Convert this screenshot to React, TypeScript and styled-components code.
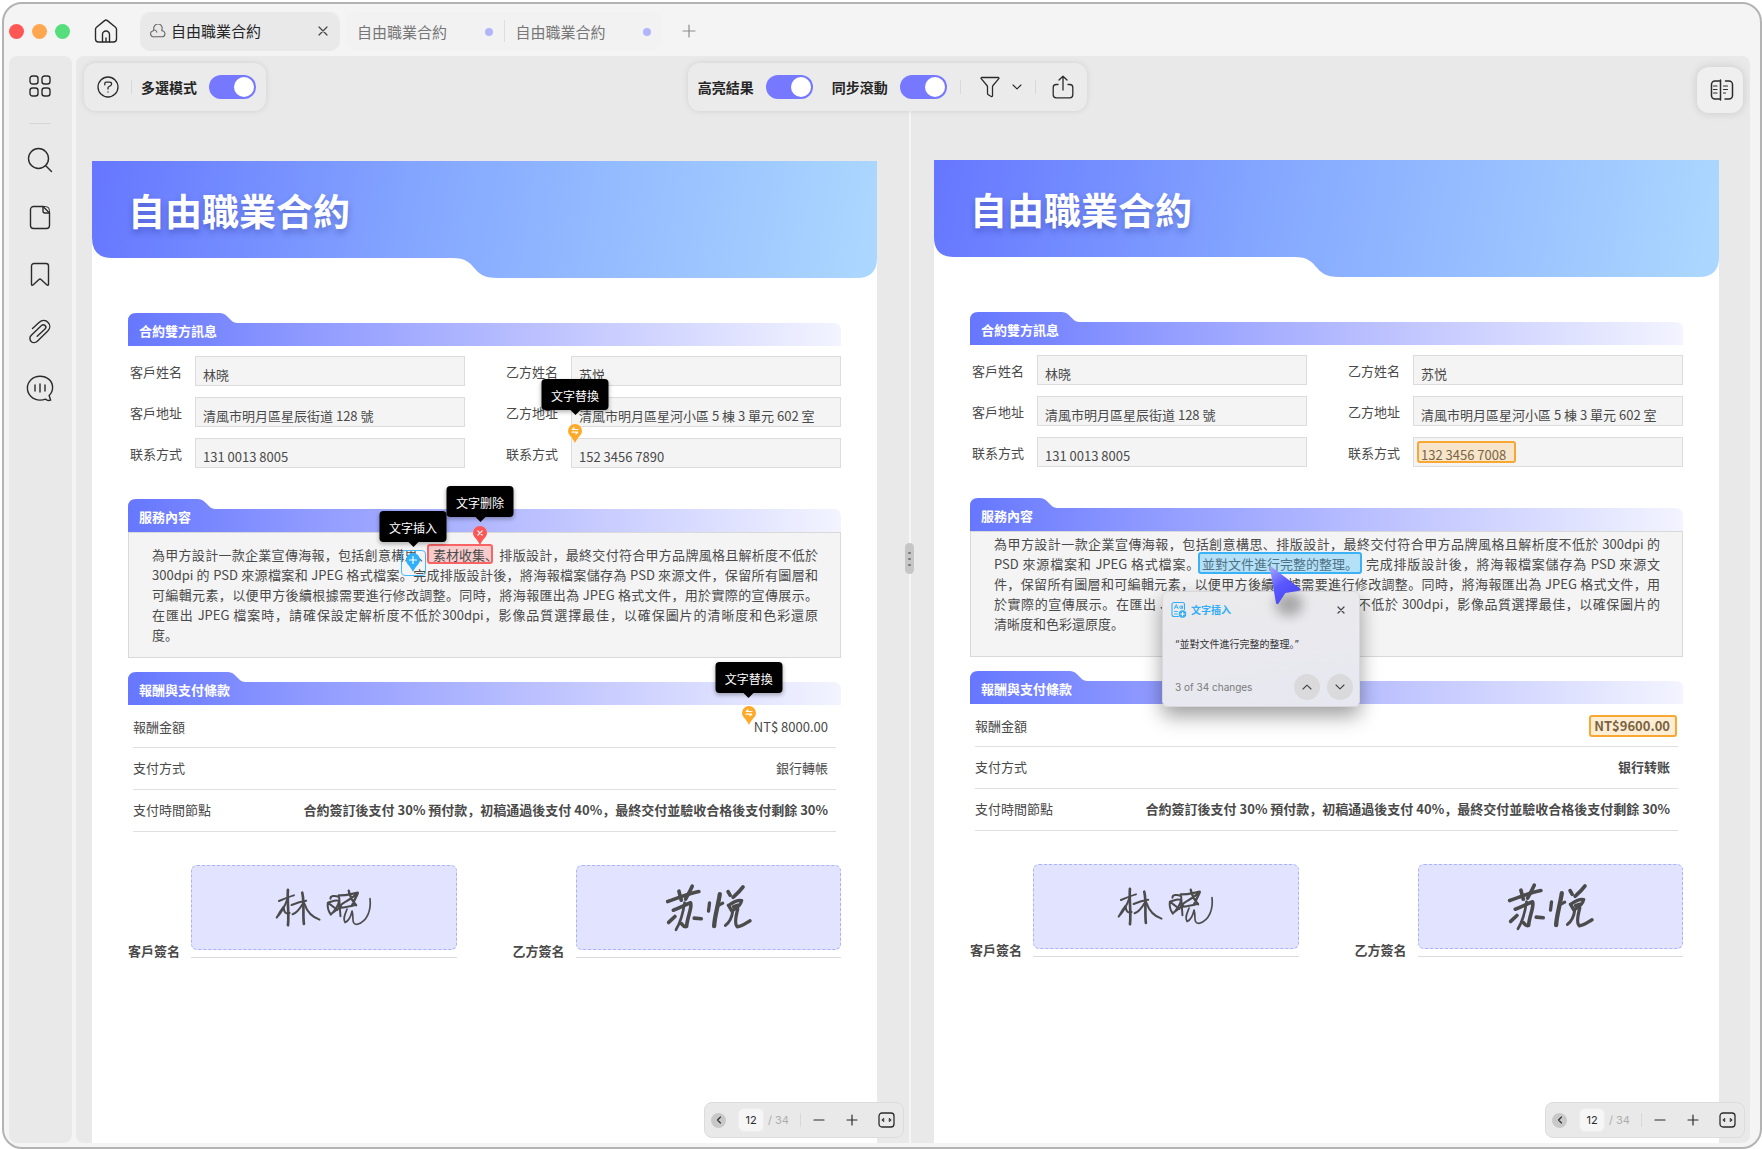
import React from "react";
import styled, { createGlobalStyle, css } from "styled-components";

const GlobalStyle = createGlobalStyle`
  *, *::before, *::after { box-sizing: border-box; }
  body {
    margin: 0;
    background: #fff;
    color: #262626;
    font-family: "Noto Sans CJK SC", "Noto Sans CJK TC", sans-serif;
    font-size: 13px;
  }
  button, input { font: inherit; color: inherit; }
  svg { display: block; }
`;

/* ---------- window frame ---------- */

const Window = styled.div`
  margin: 2px 0 0 2px;
  height: calc(100vh - 2px);
  display: flex;
  flex-direction: column;
  background: #f4f4f4;
  border: 2px solid #b3b3b3;
  border-radius: 20px;
  overflow: hidden;
`;

const TitleBar = styled.header`
  flex: none;
  height: 52px;
  display: flex;
  align-items: center;
  padding: 2px 5px 0;
`;

const Lights = styled.div`
  display: flex;
  gap: 8px;
  margin-right: 23px;
`;

const Light = styled.span<{ $color: string }>`
  width: 15px;
  height: 15px;
  border-radius: 50%;
  background: ${(p) => p.$color};
`;

const IconButton = styled.button<{ $w?: number; $h?: number; $color?: string }>`
  flex: none;
  width: ${(p) => p.$w ?? 28}px;
  height: ${(p) => p.$h ?? 28}px;
  padding: 0;
  border: 0;
  background: none;
  display: flex;
  align-items: center;
  justify-content: center;
  color: ${(p) => p.$color ?? "#2b2b2b"};
  cursor: pointer;
`;

const ActiveTab = styled.div`
  width: 200px;
  height: 39px;
  margin: 0 6px 0 21px;
  padding: 0 7px 0 10px;
  display: flex;
  align-items: center;
  background: #e9e9e9;
  border-radius: 10px;
  color: #666;
`;

const TabName = styled.button`
  flex: 1;
  padding: 0;
  border: 0;
  background: none;
  text-align: left;
  font-size: 15px;
  line-height: 22px;
  color: #262626;
  margin-left: 5px;
`;

const IdleTabs = styled.div`
  width: 316px;
  height: 39px;
  margin: 0 11px 0 0;
  display: flex;
  align-items: center;
  background: #f2f2f2;
  border-radius: 10px;
`;

const IdleTab = styled.button`
  flex: 1;
  height: 22px;
  padding: 2px 11px 0 11px;
  border: 0;
  border-right: 1px solid #dedede;
  background: none;
  display: flex;
  align-items: center;
  justify-content: space-between;
  font-size: 15px;
  line-height: 22px;
  color: #777;
  &:last-child { border-right: 0; }
`;

const UnsavedDot = styled.i`
  width: 8px;
  height: 8px;
  border-radius: 50%;
  background: #b0b6fb;
`;

const Body = styled.div`
  flex: 1;
  min-height: 0;
  display: flex;
  gap: 4px;
  padding: 0 10px 4px 5px;
`;

const Sidebar = styled.nav`
  flex: none;
  width: 63px;
  padding: 16px 2px 0 0;
  display: flex;
  flex-direction: column;
  align-items: center;
  gap: 29px;
  background: #e9e9e9;
  border-radius: 8px;
`;

const SidebarTop = styled.div`
  display: flex;
  flex-direction: column;
  align-items: center;
  gap: 23px;
  margin-bottom: -7px;
  &::after {
    content: "";
    width: 22px;
    height: 1px;
    background: #d6d6d6;
  }
`;

const Workspace = styled.main`
  flex: 1;
  min-width: 0;
  display: flex;
  flex-direction: column;
  background: #e9e9e9;
  border-radius: 8px;
  overflow: hidden;
`;

/* ---------- toolbar ---------- */

const Toolbar = styled.div`
  flex: none;
  position: relative;
  z-index: 2;
  height: 55px;
  display: grid;
  grid-template-columns: 23fr auto 25fr;
  align-items: start;
  padding: 7px 7px 0 8px;
`;

const ToolGroup = styled.div<{ $end: number }>`
  justify-self: start;
  height: 48px;
  display: flex;
  align-items: center;
  padding: 0 ${(p) => p.$end}px 0 10px;
  background: #ebebeb;
  border-radius: 12px;
  box-shadow: 0 0 6px rgba(0, 0, 0, 0.1);
`;

const Divider = styled.span<{ $gap: number }>`
  width: 1px;
  height: 14px;
  margin: 0 ${(p) => p.$gap}px;
  background: #d9d9d9;
`;

const SwitchLabel = styled.label`
  display: flex;
  align-items: center;
  gap: 12px;
  font-size: 14px;
  line-height: 20px;
  font-weight: 700;
  color: #262626;
  & + & { margin-left: 19px; }
`;

const Switch = styled.input`
  appearance: none;
  margin: 0;
  width: 47px;
  height: 24px;
  padding: 2px;
  border-radius: 12px;
  background: #c9c9c9;
  display: flex;
  &::before {
    content: "";
    width: 20px;
    height: 20px;
    border-radius: 50%;
    background: #fff;
  }
  &:checked {
    background: #7679ff;
    justify-content: flex-end;
  }
`;

const CompareButton = styled(IconButton)`
  justify-self: end;
  width: 46px;
  height: 46px;
  margin-top: 4px;
  padding-left: 3px;
  background: #efefef;
  border-radius: 12px;
  box-shadow: 0 0 10px rgba(0, 0, 0, 0.14);
`;

/* ---------- split view ---------- */

const Split = styled.div`
  flex: 1;
  min-height: 0;
  display: flex;
`;

const Pane = styled.section<{ $side: "left" | "right" }>`
  position: relative;
  flex: 1 1 0;
  min-width: 0;
  display: flex;
  padding: ${(p) => (p.$side === "left" ? "50px 32px 0 16px" : "49px 31px 0 23px")};
  overflow: hidden;
`;

const Gutter = styled.div`
  position: relative;
  flex: none;
  width: 2px;
  background: #f6f6f6;
`;

const Grip = styled.div`
  position: absolute;
  z-index: 3;
  left: -4px;
  top: 432px;
  width: 9px;
  height: 31px;
  border-radius: 5px;
  background: #c6c6c6;
  display: flex;
  flex-direction: column;
  align-items: center;
  justify-content: center;
  gap: 4px;
  i {
    width: 3px;
    height: 2px;
    border-radius: 1px;
    background: #777;
  }
`;

const Paper = styled.article`
  flex: 1;
  min-width: 0;
  background: #fff;
  color: #4a4a4a;
`;

const Banner = styled.div`
  position: relative;
  height: 117px;
  padding: 29px 36px 0;
`;

const Backdrop = styled.svg`
  position: absolute;
  inset: 0;
  width: 100%;
  height: 100%;
`;

const Title = styled.h1`
  position: relative;
  margin: 0;
  font-size: 37px;
  line-height: 40px;
  font-weight: 700;
  color: #fff;
  text-shadow: 0 4px 6px rgba(30, 40, 130, 0.35);
`;

const Content = styled.div`
  padding: 35px 36px 60px;
`;

const SectionHead = styled.div`
  position: relative;
  height: 33px;
  padding: 8px 11px 0;
`;

const SectionTitle = styled.h2`
  position: relative;
  margin: 0;
  font-size: 13px;
  line-height: 20px;
  font-weight: 700;
  color: #fff;
`;

const Fields = styled.div`
  display: grid;
  grid-template-columns: 1fr 1fr;
  column-gap: 41px;
  row-gap: 11px;
  margin: 10px 0 31px;
  padding-left: 2px;
`;

const Field = styled.div`
  display: flex;
  align-items: center;
`;

const FieldLabel = styled.span`
  flex: none;
  width: 65px;
  line-height: 20px;
  padding-top: 2px;
`;

const FieldBox = styled.div<{ $boxed?: boolean }>`
  position: relative;
  flex: 1;
  height: 30px;
  padding: 8px 0 0 ${(p) => (p.$boxed ? 3 : 7)}px;
  background: #f4f4f4;
  border: 1px solid #dcdcdc;
  line-height: 20px;
  white-space: nowrap;
`;

const Paragraph = styled.div<{ $top: number }>`
  height: 126px;
  margin-bottom: 14px;
  padding: ${(p) => p.$top}px 22px 0 23px;
  background: #f4f4f4;
  border: 1px solid #d9d9d9;
`;

const Line = styled.span`
  display: block;
  line-height: 20px;
  white-space: nowrap;
  text-align: justify;
  text-align-last: justify;
  &:last-child { text-align-last: left; }
`;

const tones = {
  red: css`background: rgba(255, 85, 85, 0.25); border-color: #f86464;`,
  blue: css`background: rgba(60, 185, 255, 0.35); border-color: #3ab2f5; color: #4f7285;`,
  amber: css`background: rgba(255, 168, 40, 0.2); border-color: #f9a733; color: #7a6442;`,
};

const Mark = styled.span<{ $tone: keyof typeof tones }>`
  position: relative;
  display: inline-block;
  border: 2px solid;
  border-radius: 3px;
  ${(p) => tones[p.$tone]}
`;

/* The frame stops halfway through the closing comma, which hangs out of it. */
const DeletedMark = styled(Mark)`
  width: 66px;
  margin: -4px 6px -2px -4px;
  padding: 2px 0 0 4px;
  line-height: 14px;
`;

const InsertedMark = styled(Mark)`
  width: 164px;
  margin: -3px 3px -2px -2px;
  padding: 1px 2px 0;
  line-height: 17px;
`;

const FieldMark = styled(Mark)`
  padding: 4px 8px 0 2px;
  margin-top: -5px;
  line-height: 16px;
  height: 22px;
  vertical-align: top;
`;

const AmountMark = styled(Mark)`
  margin: -2px -7px -2px 0;
  padding: 0 5px 0 3px;
  line-height: 18px;
`;

const PayTable = styled.table`
  width: calc(100% - 10px);
  margin: 0 5px 33px 5px;
  border-collapse: collapse;
  line-height: 20px;
  tr { height: 42px; }
  th, td {
    padding: 0;
    border-bottom: 1px solid #e0e0e0;
  }
  tr:first-child > * { padding-top: 3px; }
  th { text-align: left; font-weight: 400; }
  td { text-align: right; padding-right: 8px; }
`;

const PayValue = styled.span<{ $bold?: boolean }>`
  position: relative;
  font-weight: ${(p) => (p.$bold ? 700 : 400)};
`;

const Signatures = styled.div`
  display: grid;
  grid-template-columns: 1fr 1fr;
  column-gap: 56px;
`;

const Signature = styled.div`
  display: flex;
  align-items: flex-end;
  strong {
    flex: none;
    width: 63px;
    line-height: 14px;
  }
`;

const SignLine = styled.div`
  flex: 1;
  padding-bottom: 7px;
  border-bottom: 1px solid #dcdcdc;
`;

const SignBox = styled.div`
  height: 85px;
  display: flex;
  align-items: center;
  justify-content: center;
  background: #e2e3ff;
  border: 1px dashed #a9b2fb;
  border-radius: 6px;
`;

/* ---------- change markers ---------- */

const MarkerSpot = styled.span<{ $x: number; $y: number }>`
  position: absolute;
  z-index: 1;
  left: ${(p) => p.$x}px;
  top: ${(p) => p.$y}px;
  width: 14px;
`;

const Tip = styled.span<{ $gap: number }>`
  position: absolute;
  left: 50%;
  bottom: calc(100% + ${(p) => p.$gap}px);
  transform: translateX(-50%);
  width: 67px;
  height: 31px;
  display: flex;
  align-items: center;
  justify-content: center;
  padding-top: 2px;
  background: #000;
  border-radius: 4px;
  box-shadow: 0 2px 4px rgba(0, 0, 0, 0.3);
  color: #fff;
  font-size: 12px;
  font-weight: 400;
  line-height: 20px;
  white-space: nowrap;
  &::after {
    content: "";
    position: absolute;
    top: 100%;
    left: 50%;
    margin-left: -5px;
    border: 5px solid transparent;
    border-top-color: #000;
    border-bottom: 0;
  }
`;

const InsertFrame = styled.span`
  position: absolute;
  left: -5px;
  top: -3px;
  width: 25px;
  height: 26px;
  border: 1px solid #45b8fb;
  border-radius: 4px;
`;

/* ---------- change popup ---------- */

const Popup = styled.aside`
  position: absolute;
  z-index: 2;
  left: -38px;
  top: 37px;
  width: 198px;
  height: 116px;
  padding: 9px 6px 6px 8px;
  display: flex;
  flex-direction: column;
  justify-content: space-between;
  background: linear-gradient(170deg, #ebebec, #e7e7f1);
  border: 1px solid #d8d8dc;
  border-radius: 6px;
  box-shadow: 0 9px 20px rgba(0, 0, 0, 0.38);
  color: #333;
  font-size: 10px;
  line-height: 16px;
  text-align-last: left;
`;

const PopupHead = styled.div`
  display: flex;
  align-items: center;
  gap: 4px;
  color: #33adf5;
  strong { flex: 1; }
`;

const PopupText = styled.p`
  margin: 0 0 5px 4px;
  font-family: Inter, "Noto Sans CJK SC", sans-serif;
`;

const PopupFoot = styled.div`
  display: flex;
  align-items: center;
  gap: 7px;
  padding-left: 4px;
  font-family: Inter, "Liberation Sans", sans-serif;
  color: #7b7b7b;
  span { flex: 1; }
`;

const RoundButton = styled(IconButton)`
  border-radius: 50%;
  background: #dadadc;
`;

const Pointer = styled.svg`
  position: absolute;
  z-index: 3;
  left: 69px;
  top: 12px;
  overflow: visible;
`;

/* ---------- pager ---------- */

const Pager = styled.div`
  position: absolute;
  right: 5px;
  bottom: 5px;
  width: 200px;
  height: 36px;
  padding: 0 8px 0 6px;
  display: flex;
  align-items: center;
  background: #e9e9e9;
  border: 1px solid #dcdcdc;
  border-radius: 8px;
  font-family: Inter, "Liberation Sans", sans-serif;
  font-size: 11px;
  color: #adadad;
`;

const PageInput = styled.input`
  width: 26px;
  height: 24px;
  margin: 0 4px 0 12px;
  padding: 0;
  border: 1px solid #ededed;
  border-radius: 6px;
  background: #f6f6f6;
  text-align: center;
  color: #2b2b2b;
`;

const PrevButton = styled(IconButton)`
  border-radius: 50%;
  background: #c8c8c8;
`;

const PagerTools = styled.div`
  flex: 1;
  display: flex;
  align-items: center;
  justify-content: space-between;
`;

/* ---------- icons ---------- */

type IconProps = { w: number; h: number; sw?: number; children: React.ReactNode };

function Icon({ w, h, sw = 1.4, children }: IconProps) {
  return (
    <svg width={w} height={h} viewBox={`0 0 ${w} ${h}`} fill="none" stroke="currentColor"
      strokeWidth={sw} strokeLinecap="round" strokeLinejoin="round" aria-hidden="true">
      {children}
    </svg>
  );
}

const HomeIcon = () => (
  <Icon w={24} h={24}>
    <path d="M1.5 10.2c0-.8.4-1.5 1-2L10.6 1.600c.8-.6 2-.6 2.800 0L21.500 8.200c.6.5 1 1.200 1 2V20c0 1.700-1.300 3-3 3h-15c-1.700 0-3-1.300-3-3z" />
    <path d="M8.500 23v-7.500a3.500 3.500 0 0 1 7 0V23M12 19v3.500" />
  </Icon>
);
const CloudIcon = () => (
  <Icon w={16} h={14} sw={1.1}>
    <path d="M4.500 12.800h7.500a3 3 0 0 0 1-5.800c-.6-.2-1-.4-1.300-.9a4.200 4.200 0 1 0-7.900-1.200c.2 1-.1 1.600-1 2.100a3 3 0 0 0 1.700 5.800zM4 5.800c1.600.2 2.500 1 2.800 2.400" />
  </Icon>
);
const CloseIcon = ({ s }: { s: number }) => (
  <Icon w={s} h={s} sw={1.2}><path d={`M1 1L${s - 1} ${s - 1}M${s - 1} 1L1 ${s - 1}`} /></Icon>
);
const PlusIcon = ({ s }: { s: number }) => (
  <Icon w={s} h={s} sw={1.2}><path d={`M${s / 2} 1V${s - 1}M1 ${s / 2}H${s - 1}`} /></Icon>
);
const MinusIcon = () => <Icon w={12} h={12} sw={1.2}><path d="M1 6h10" /></Icon>;
const GridIcon = () => (
  <Icon w={22} h={22}>
    {[[1, 1], [13, 1], [1, 13], [13, 13]].map(([x, y]) => (
      <rect key={`${x}-${y}`} x={x} y={y} width="8" height="8" rx="2.500" />
    ))}
  </Icon>
);
const SearchIcon = () => <Icon w={26} h={26}><circle cx="11.500" cy="11.500" r="10" /><path d="M19 19l5.500 5.500" /></Icon>;
const PageIcon = () => (
  <Icon w={22} h={25}>
    <path d="M14 1.500H4.500a3 3 0 0 0-3 3v16a3 3 0 0 0 3 3h13a3 3 0 0 0 3-3V8z" />
    <path d="M14 1.500v4.500a2 2 0 0 0 2 2h4.500" /><path d="M14 1.500h2.500a4 4 0 0 1 4 4V8" strokeWidth="1" />
  </Icon>
);
const BookmarkIcon = () => (
  <Icon w={20} h={25}>
    <path d="M1.500 4a2.500 2.500 0 0 1 2.500-2.500h12A2.500 2.500 0 0 1 18.500 4v18.300c0 1-.8 1.300-1.500.7l-6-5.500c-.6-.5-1.400-.5-2 0L3 23c-.7.6-1.500.3-1.500-.7z" />
  </Icon>
);
const ClipIcon = () => (
  <Icon w={24} h={25}>
    <path d="M4.500 9.500l6.800-6.300c2.800-2.500 6.500-2.200 8.800.2s2.200 6-.3 8.500L9.300 22.300c-1.800 1.700-4.500 1.800-6.200.1s-1.600-4.400.2-6.100L13.500 6.600c1.100-1 2.600-1 3.600 0s.9 2.500-.1 3.500L9.200 17.300" />
  </Icon>
);
const ChatIcon = () => (
  <Icon w={28} h={27}>
    <path d="M14 1.200c7.200 0 12.600 4.700 12.600 11.300 0 3.200-1.400 6-3.500 8.100l1.600 4.600c-2 .6-4 .2-5.300-1.100-1.600.7-3.400 1-5.400 1C6.800 25.100 1.400 19.500 1.400 13S6.800 1.200 14 1.200z" />
    <path d="M9 10v6M14 9v8M19 10v6" />
  </Icon>
);
const HelpIcon = () => (
  <Icon w={22} h={22} sw={1.3}>
    <circle cx="11" cy="11" r="10" />
    <path d="M7.800 8.800V7.500c0-.8.500-1.300 1.300-1.300h3.500c1.200 0 2 .7 2 1.800 0 .8-.5 1.400-1.200 1.800L11.700 10.800c-.5.300-.7.700-.7 1.200v1" />
    <path d="M11 15.800v.3" />
  </Icon>
);
const FilterIcon = () => (
  <Icon w={20} h={22} sw={1.3}>
    <path d="M1.800 1.500h16.400c.7 0 1 .7.600 1.200L13 9.500c-.4.400-.5.900-.5 1.400v8.800c0 .8-.7 1.200-1.300.8l-2.900-1.800c-.5-.3-.8-.8-.8-1.400v-6.400c0-.5-.2-1-.5-1.400L1.200 2.700c-.4-.5-.1-1.200.6-1.200z" />
  </Icon>
);
const Chevron = ({ dir, w = 10 }: { dir: "up" | "down" | "left"; w?: number }) => {
  const d = { up: "M1 7L5 3.200 9 7", down: "M1 3L5 6.800 9 3", left: "M6.500 2L3.500 5l3 3" }[dir];
  return (
    <svg width={w} height={w} viewBox="0 0 10 10" fill="none" stroke="currentColor"
      strokeWidth="1.100" strokeLinecap="round" strokeLinejoin="round" aria-hidden="true"><path d={d} /></svg>
  );
};
const ShareIcon = () => (
  <Icon w={22} h={24} sw={1.3}>
    <path d="M6 9.500H4.200c-1.700 0-3 1.300-3 3v7.300c0 1.700 1.300 3 3 3h13.600c1.700 0 3-1.300 3-3v-7.300c0-1.700-1.300-3-3-3H16" />
    <path d="M11 15V1.200M7 5l4-3.800L15 5" />
  </Icon>
);
const CompareIcon = () => (
  <Icon w={24} h={22} sw={1.500}>
    <path d="M10 2H5a3.500 3.500 0 0 0-3.500 3.500v11A3.500 3.500 0 0 0 5 20h5M10.500 1v20" />
    <path d="M15.500 2H19a3.500 3.500 0 0 1 3.500 3.500v11A3.500 3.500 0 0 1 19 20h-4" />
    <path d="M3.500 7H7M3.500 10.500H7M3.500 14H7M13.500 7h4M13.500 10.500h4M13.500 14h2" strokeWidth="1.200" />
  </Icon>
);
const FitIcon = () => (
  <Icon w={17} h={16} sw={1.3}>
    <rect x="1" y="1" width="15" height="14" rx="3" />
    <path d="M5.500 6.500L3.800 8l1.700 1.500zM11.500 6.500L13.200 8l-1.700 1.500z" fill="currentColor" strokeWidth=".8" />
  </Icon>
);
const InsertIcon = () => (
  <Icon w={16} h={17} sw={1.1}>
    <path d="M7.500 15.500H3a2 2 0 0 1-2-2v-10a2 2 0 0 1 2-2h8.500a2 2 0 0 1 2 2v5" />
    <path d="M3.500 7.500l1.800-4 1.800 4M4.200 6.200h2.200M3.500 10.500h3M3.500 13h3" strokeWidth=".9" />
    <circle cx="10" cy="6.200" r="1.300" strokeWidth=".9" /><path d="M11.400 5v2.500" strokeWidth=".9" />
    <circle cx="11.500" cy="13" r="3.200" fill="currentColor" />
    <path d="M11.500 11.300v3.400M9.800 13h3.400" stroke="#fff" />
  </Icon>
);

type MarkerKind = "replace" | "delete" | "insert";
const PIN = {
  replace: { color: "#ffa928", glyph: "M10 5.500H4.300l1.800-1.700M4 8.200h5.700L7.900 9.900" },
  delete: { color: "#fd5656", glyph: "M4.800 4.800l4.400 4.400M9.200 4.800L4.800 9.200" },
  insert: { color: "#2eb0fb", glyph: "M7 3.500v7M3.500 7h7" },
};

type MarkerProps = { kind: MarkerKind; label: string; x: number; y: number; gap: number };

function Marker({ kind, label, x, y, gap }: MarkerProps) {
  return (
    <MarkerSpot $x={x} $y={y}>
      <Tip role="tooltip" $gap={gap}>{label}</Tip>
      {kind === "insert" && <InsertFrame />}
      <svg width="14" height="19" viewBox="0 0 14 19" aria-hidden="true">
        <path d="M7 0a7 7 0 0 1 7 7c0 4-4.500 6-7 12C4.500 13 0 11 0 7a7 7 0 0 1 7-7z" fill={PIN[kind].color} />
        <path d={PIN[kind].glyph} fill="none" stroke="#fff" strokeWidth="1.200" strokeLinecap="round" strokeLinejoin="round" />
      </svg>
    </MarkerSpot>
  );
}

/* ---------- signatures ---------- */

const CustomerSignature = () => (
  <svg width="98" height="40" viewBox="40 25 295 120" fill="none" stroke="#4b4b4b"
    strokeLinecap="round" strokeLinejoin="round" role="img" aria-label="林晓">
    <path d="M79 33C76 65 83 105 79 140" strokeWidth="8" />
    <path d="M52 67C68 60 82 54 97 50" strokeWidth="6" />
    <path d="M77 62C69 85 58 103 45 117C52 104 60 92 66 84C67 100 71 108 84 103" strokeWidth="6" />
    <path d="M122 42C129 70 123 105 127 136" strokeWidth="8" />
    <path d="M90 79C104 73 120 68 134 66" strokeWidth="6" />
    <path d="M123 76C114 92 104 103 93 107M128 74C136 98 150 115 174 123" strokeWidth="6" />
    <path d="M199 72C197 88 202 100 208 108C218 98 230 82 233 67C223 62 211 69 199 72M202 74L228 94M211 104C222 97 230 90 240 84" strokeWidth="6" />
    <path d="M207 60C206 51 220 49 233 55L237 113" strokeWidth="6" />
    <path d="M232 50C255 51 273 44 289 42C271 62 249 68 232 84M262 36C266 56 274 68 284 80M289 44L272 80" strokeWidth="7" />
    <path d="M238 87C254 86 269 82 284 78" strokeWidth="6" />
    <path d="M257 91C251 106 243 121 251 132C261 127 269 111 272 97C278 115 268 139 288 137C318 128 330 94 326 60" strokeWidth="5" />
  </svg>
);

const PartnerSignature = () => (
  <svg width="87" height="49" viewBox="1205 18 262 146" fill="none" stroke="#4b4b4b"
    strokeLinecap="round" strokeLinejoin="round" role="img" aria-label="苏悦">
    <path d="M1213 73C1240 64 1275 49 1307 43" strokeWidth="11" />
    <path d="M1247 42L1254 69M1287 27C1280 43 1274 53 1267 66" strokeWidth="11" />
    <path d="M1230 99C1250 92 1267 82 1282 77C1288 88 1272 121 1270 148C1264 151 1259 145 1255 140" strokeWidth="11" />
    <path d="M1264 76C1260 105 1251 137 1238 158" strokeWidth="8" />
    <path d="M1216 136L1235 118" strokeWidth="11" />
    <path d="M1293 123L1314 125" strokeWidth="11" />
    <path d="M1339 77C1338 87 1337 95 1336 102" strokeWidth="10" />
    <path d="M1370 51C1365 85 1354 120 1353 147" strokeWidth="13" />
    <path d="M1366 85L1379 78" strokeWidth="9" />
    <path d="M1395 43L1401 54M1440 29C1430 43 1419 52 1410 60" strokeWidth="11" />
    <path d="M1396 85C1410 75 1424 68 1436 70C1433 84 1424 93 1406 101L1396 84M1411 88L1425 84" strokeWidth="10" />
    <path d="M1409 101C1407 120 1398 136 1387 145" strokeWidth="9" />
    <path d="M1424 96C1418 119 1414 143 1423 149C1437 149 1447 139 1461 131" strokeWidth="10" />
  </svg>
);

/* ---------- document ---------- */

function BannerHead({ id }: { id: string }) {
  return (
    <Banner>
      <Backdrop viewBox="0 0 785 117" preserveAspectRatio="none" aria-hidden="true">
        <defs>
          <linearGradient id={id} gradientUnits="userSpaceOnUse" x1="0" y1="20" x2="760" y2="150">
            <stop offset="0" stopColor="#6677ff" />
            <stop offset=".45" stopColor="#86a9ff" />
            <stop offset="1" stopColor="#aad6ff" />
          </linearGradient>
        </defs>
        <path fill={`url(#${id})`}
          d="M0 0H785V97Q785 117 765 117H406C376 117 388 97 360 97H20Q0 97 0 77Z" />
      </Backdrop>
      <Title>自由職業合約</Title>
    </Banner>
  );
}

function Section({ id, tab, children }: { id: string; tab: number; children: string }) {
  return (
    <SectionHead>
      <Backdrop viewBox="0 0 713 33" preserveAspectRatio="none" aria-hidden="true">
        <defs>
          <linearGradient id={id}>
            <stop offset="0" stopColor="#6677ff" />
            <stop offset=".25" stopColor="#8f9aff" />
            <stop offset=".6" stopColor="#bfc4ff" />
            <stop offset="1" stopColor="#f3f4ff" />
          </linearGradient>
        </defs>
        <path fill={`url(#${id})`}
          d={`M0 33V8Q0 0 8 0H${tab - 6}C${tab + 2} 0 ${tab + 4} 10 ${tab + 11} 10H705Q713 10 713 18V33Z`} />
      </Backdrop>
      <SectionTitle>{children}</SectionTitle>
    </SectionHead>
  );
}

type Item = { label: string; value: React.ReactNode; boxed?: boolean };
type Pay = { label: string; value: React.ReactNode; bold?: boolean };
type DocProps = { id: string; fields: Item[]; lines: React.ReactNode[]; linesTop: number; pay: Pay[] };

function Contract({ id, fields, lines, linesTop, pay }: DocProps) {
  return (
    <Paper>
      <BannerHead id={`${id}-banner`} />
      <Content>
        <Section id={`${id}-parties`} tab={98}>合約雙方訊息</Section>
        <Fields>
          {fields.map((f, i) => (
            <Field key={i}>
              <FieldLabel>{f.label}</FieldLabel>
              <FieldBox $boxed={f.boxed}>{f.value}</FieldBox>
            </Field>
          ))}
        </Fields>
        <Section id={`${id}-service`} tab={76}>服務內容</Section>
        <Paragraph $top={linesTop}>
          {lines.map((line, i) => <Line key={i}>{line}</Line>)}
        </Paragraph>
        <Section id={`${id}-payment`} tab={106}>報酬與支付條款</Section>
        <PayTable>
          <tbody>
            {pay.map((p) => (
              <tr key={p.label}>
                <th scope="row">{p.label}</th>
                <td><PayValue $bold={p.bold}>{p.value}</PayValue></td>
              </tr>
            ))}
          </tbody>
        </PayTable>
        <Signatures>
          <Signature>
            <strong>客戶簽名</strong>
            <SignLine><SignBox><CustomerSignature /></SignBox></SignLine>
          </Signature>
          <Signature>
            <strong>乙方簽名</strong>
            <SignLine><SignBox><PartnerSignature /></SignBox></SignLine>
          </Signature>
        </Signatures>
      </Content>
    </Paper>
  );
}

function PageControls() {
  return (
    <Pager>
      <PrevButton $w={15} $h={15} aria-label="上一頁"><Chevron dir="left" /></PrevButton>
      <PageInput defaultValue="12" aria-label="頁碼" />
      <span>/ 34</span>
      <Divider $gap={11} />
      <PagerTools>
        <IconButton $w={14} $h={24} aria-label="縮小"><MinusIcon /></IconButton>
        <IconButton $w={14} $h={24} aria-label="放大"><PlusIcon s={12} /></IconButton>
        <IconButton $w={17} $h={24} aria-label="符合寬度"><FitIcon /></IconButton>
      </PagerTools>
    </Pager>
  );
}

function ChangePopup() {
  return (
    <Popup>
      <PopupHead>
        <InsertIcon />
        <strong>文字插入</strong>
        <IconButton $w={24} $h={16} $color="#444" aria-label="關閉"><CloseIcon s={8} /></IconButton>
      </PopupHead>
      <PopupText>“並對文件進行完整的整理。”</PopupText>
      <PopupFoot>
        <span>3 of 34 changes</span>
        <RoundButton $w={26} $h={26} $color="#444" aria-label="上一個"><Chevron dir="up" /></RoundButton>
        <RoundButton $w={26} $h={26} $color="#444" aria-label="下一個"><Chevron dir="down" /></RoundButton>
      </PopupFoot>
    </Popup>
  );
}

const PointerArrow = () => (
  <Pointer width="34" height="42" viewBox="0 0 34 42" aria-hidden="true">
    <defs>
      <linearGradient id="pointer-fill" x1="0" y1="0" x2=".6" y2="1">
        <stop offset="0" stopColor="#a9a8ff" />
        <stop offset=".5" stopColor="#5a58ff" />
        <stop offset="1" stopColor="#4a47f0" />
      </linearGradient>
      <filter id="pointer-blur" x="-100%" y="-100%" width="300%" height="300%">
        <feGaussianBlur stdDeviation="6" />
      </filter>
    </defs>
    <ellipse cx="20" cy="38" rx="14" ry="12" fill="#000" opacity=".28" filter="url(#pointer-blur)" />
    <path d="M1 2.500c-.5-1.300.7-2.300 1.800-1.500L31 22.500c1 .8.600 2-.6 2.200l-14 2.300L9.500 37.500c-.8 1.200-2.200.9-2.500-.4z" fill="url(#pointer-fill)" />
  </Pointer>
);

const commonFields: Item[] = [
  { label: "客戶姓名", value: "林晓" },
  { label: "乙方姓名", value: "苏悦" },
  { label: "客戶地址", value: "清風市明月區星辰街道 128 號" },
  { label: "乙方地址", value: "清風市明月區星河小區 5 棟 3 單元 602 室" },
  { label: "联系方式", value: "131 0013 8005" },
];

const schedule = "合約簽訂後支付 30% 預付款，初稿通過後支付 40%，最終交付並驗收合格後支付剩餘 30%";

const original: DocProps = {
  id: "original",
  fields: [
    ...commonFields,
    {
      label: "联系方式",
      value: <>152 3456 7890<Marker kind="replace" label="文字替換" x={-4} y={-15} gap={14} /></>,
    },
  ],
  linesTop: 12,
  lines: [
    <>
      為甲方設計一款企業宣傳海報，包括創意構思、
      <DeletedMark $tone="red">
        素材收集、
        <Marker kind="delete" label="文字删除" x={44} y={-20} gap={9} />
        <Marker kind="insert" label="文字插入" x={-23} y={7} gap={11} />
      </DeletedMark>
      排版設計，最終交付符合甲方品牌風格且解析度不低於
    </>,
    "300dpi 的 PSD 來源檔案和 JPEG 格式檔案。完成排版設計後，將海報檔案儲存為 PSD 來源文件，保留所有圖層和",
    "可編輯元素，以便甲方後續根據需要進行修改調整。同時，將海報匯出為 JPEG 格式文件，用於實際的宣傳展示。",
    "在匯出 JPEG 檔案時，請確保設定解析度不低於300dpi，影像品質選擇最佳，以確保圖片的清晰度和色彩還原",
    "度。",
  ],
  pay: [
    { label: "報酬金額", value: <>NT$ 8000.00<Marker kind="replace" label="文字替換" x={-12} y={-11} gap={13} /></> },
    { label: "支付方式", value: "銀行轉帳" },
    { label: "支付時間節點", value: schedule, bold: true },
  ],
};

const revised: DocProps = {
  id: "revised",
  fields: [
    ...commonFields,
    { label: "联系方式", value: <FieldMark $tone="amber">132 3456 7008</FieldMark>, boxed: true },
  ],
  linesTop: 2,
  lines: [
    "為甲方設計一款企業宣傳海報，包括創意構思、排版設計，最終交付符合甲方品牌風格且解析度不低於 300dpi 的",
    <>
      PSD 來源檔案和 JPEG 格式檔案。
      <InsertedMark $tone="blue">
        並對文件進行完整的整理。
        <ChangePopup />
        <PointerArrow />
      </InsertedMark>
      完成排版設計後，將海報檔案儲存為 PSD 來源文
    </>,
    "件，保留所有圖層和可編輯元素，以便甲方後續根據需要進行修改調整。同時，將海報匯出為 JPEG 格式文件，用",
    "於實際的宣傳展示。在匯出 JPEG 檔案時，請確保設定解析度不低於 300dpi，影像品質選擇最佳，以確保圖片的",
    "清晰度和色彩還原度。",
  ],
  pay: [
    { label: "報酬金額", value: <AmountMark $tone="amber">NT$9600.00</AmountMark>, bold: true },
    { label: "支付方式", value: "银行转账", bold: true },
    { label: "支付時間節點", value: schedule, bold: true },
  ],
};

export default function App() {
  return (
    <>
      <GlobalStyle />
      <Window>
        <TitleBar>
          <Lights>
            <Light $color="#ff5754" />
            <Light $color="#ffa750" />
            <Light $color="#57de7c" />
          </Lights>
          <IconButton $w={26} aria-label="首頁"><HomeIcon /></IconButton>
          <ActiveTab>
            <CloudIcon />
            <TabName>自由職業合約</TabName>
            <IconButton $w={20} $color="#444" aria-label="關閉分頁"><CloseIcon s={10} /></IconButton>
          </ActiveTab>
          <IdleTabs>
            <IdleTab>自由職業合約<UnsavedDot /></IdleTab>
            <IdleTab>自由職業合約<UnsavedDot /></IdleTab>
          </IdleTabs>
          <IconButton $w={32} $color="#8c8c8c" aria-label="新增分頁"><PlusIcon s={14} /></IconButton>
        </TitleBar>
        <Body>
          <Sidebar>
            <SidebarTop>
              <IconButton aria-label="縮圖"><GridIcon /></IconButton>
            </SidebarTop>
            <IconButton aria-label="搜尋"><SearchIcon /></IconButton>
            <IconButton aria-label="頁面"><PageIcon /></IconButton>
            <IconButton aria-label="書籤"><BookmarkIcon /></IconButton>
            <IconButton aria-label="附件"><ClipIcon /></IconButton>
            <IconButton aria-label="註解"><ChatIcon /></IconButton>
          </Sidebar>
          <Workspace>
            <Toolbar>
              <ToolGroup $end={10}>
                <IconButton aria-label="說明"><HelpIcon /></IconButton>
                <Divider $gap={9} />
                <SwitchLabel>多選模式<Switch type="checkbox" defaultChecked /></SwitchLabel>
              </ToolGroup>
              <ToolGroup $end={4}>
                <SwitchLabel>高亮結果<Switch type="checkbox" defaultChecked /></SwitchLabel>
                <SwitchLabel>同步滾動<Switch type="checkbox" defaultChecked /></SwitchLabel>
                <Divider $gap={13} />
                <IconButton $w={32} aria-label="篩選"><FilterIcon /></IconButton>
                <IconButton $w={22} aria-label="篩選選項"><Chevron dir="down" /></IconButton>
                <Divider $gap={7} />
                <IconButton $w={40} aria-label="分享"><ShareIcon /></IconButton>
              </ToolGroup>
              <CompareButton aria-label="對照檢視"><CompareIcon /></CompareButton>
            </Toolbar>
            <Split>
              <Pane $side="left">
                <Contract {...original} />
                <PageControls />
              </Pane>
              <Gutter><Grip><i /><i /><i /></Grip></Gutter>
              <Pane $side="right">
                <Contract {...revised} />
                <PageControls />
              </Pane>
            </Split>
          </Workspace>
        </Body>
      </Window>
    </>
  );
}
